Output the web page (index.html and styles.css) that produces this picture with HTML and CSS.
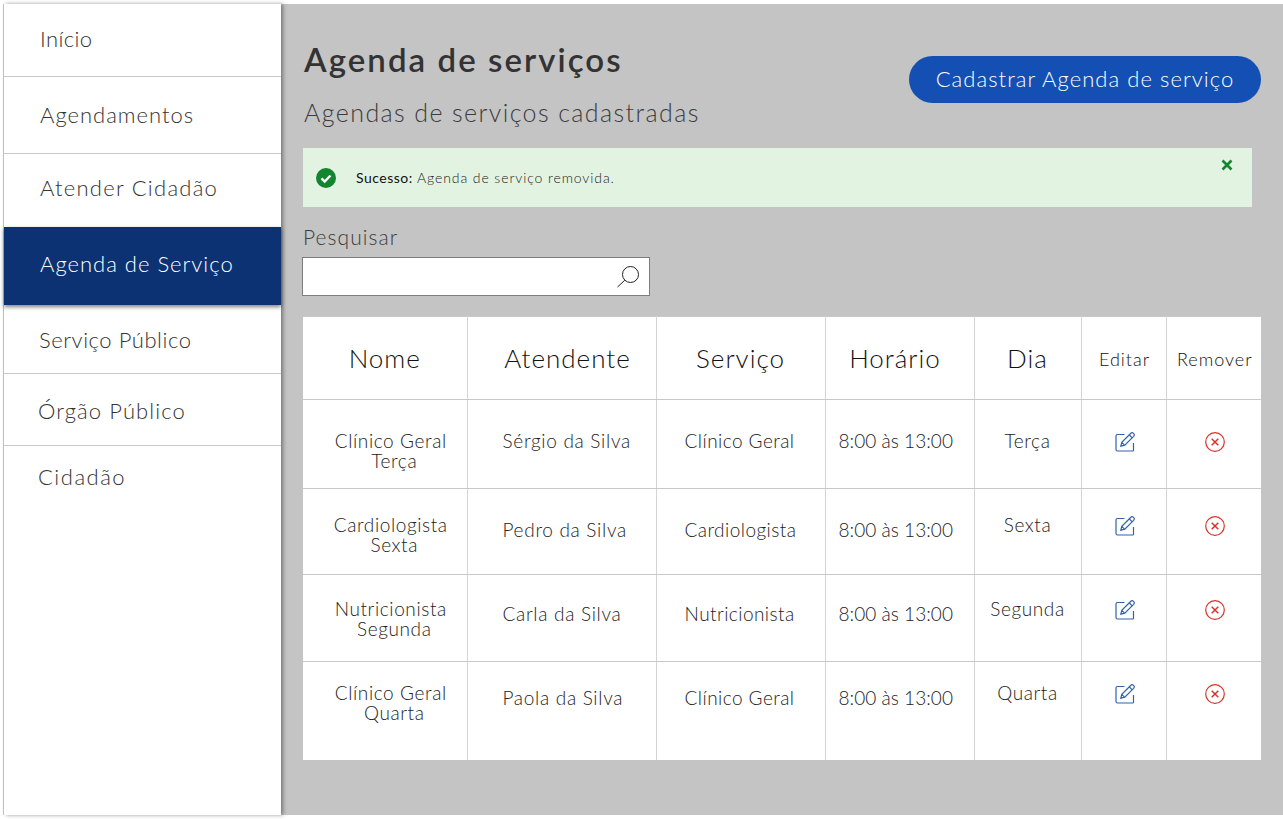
FILE: index.html
```html
<!DOCTYPE html>
<html>
	<head>
		<meta charset="UTF-8">
		<title>Agenda de serviços</title>
		<link rel="stylesheet" href="styles.css">
	</head>
	<body>
		<svg class="defs">
			<symbol id="i-edit" viewBox="0 0 20 20">
				<path d="M9.500 2.500H2.500a1.500 1.500 0 0 0-1.500 1.500v13.500a1.500 1.500 0 0 0 1.500 1.500h15a1 1 0 0 0 1-1v-7" fill="none" stroke="#2f62ad" stroke-width="1.200"/>
				<path d="M5.800 14.200l1-3.800L15.600 1.500a1.600 1.600 0 0 1 3 2.800L9.800 13.200zM14.300 2.900l2.900 2.900M6.800 10.400l2.900 2.900" fill="none" stroke="#2f62ad" stroke-width="1.200"/>
			</symbol>
			<symbol id="i-remove" viewBox="0 0 20 20">
				<circle cx="10" cy="10" r="9.300" fill="none" stroke="#d2352c" stroke-width="1.200"/>
				<path d="M6.700 6.700l6.600 6.600M13.300 6.700l-6.600 6.600" fill="none" stroke="#d2352c" stroke-width="1.500"/>
			</symbol>
		</svg>
		<div id="box">
			<ul id="menu">
				<li class="m1">Início</li>
				<li class="m2">Agendamentos</li>
				<li class="m3">Atender Cidadão</li>
				<li class="m4 active">Agenda de Serviço</li>
				<li class="m5">Serviço Público</li>
				<li class="m6">Órgão Público</li>
				<li class="m7">Cidadão</li>
			</ul>
			<div id="main">
				<div class="top">
					<div>
						<h1>Agenda de serviços</h1>
						<h2>Agendas de serviços cadastradas</h2>
					</div>
					<a class="btn">Cadastrar Agenda de serviço</a>
				</div>
				<div class="alert">
					<svg class="ok" width="20" height="20" viewBox="0 0 20 20"><circle cx="10" cy="10" r="10" fill="#14852f"/><path d="M5.500 10.300l3.200 3.200 5.800-6" fill="none" stroke="#fff" stroke-width="2.400"/></svg>
					<p><b>Sucesso:</b> Agenda de serviço removida.</p>
					<svg class="close" width="12" height="12" viewBox="0 0 12 12"><path d="M1.500 1.500l9 9M10.500 1.500l-9 9" fill="none" stroke="#14852f" stroke-width="2.600"/></svg>
				</div>
				<label class="lbl">Pesquisar</label>
				<div class="search">
					<svg width="26" height="26" viewBox="0 0 26 26"><circle cx="15.500" cy="10.500" r="8" fill="none" stroke="#222" stroke-width="1"/><path d="M9.800 16.200L2.500 23" fill="none" stroke="#222" stroke-width="1"/></svg>
				</div>
				<table id="list">
					<colgroup>
						<col class="c1"><col class="c2"><col class="c3"><col class="c4"><col class="c5"><col class="c6"><col class="c7">
					</colgroup>
					<thead>
						<tr>
							<th>Nome</th><th class="h2">Atendente</th><th>Serviço</th><th class="h4">Horário</th><th>Dia</th><th class="small">Editar</th><th class="small">Remover</th>
						</tr>
					</thead>
					<tbody>
						<tr class="r1">
							<td class="up nome">Clínico Geral<span>Terça</span></td><td class="left pes">Sérgio da Silva</td><td class="left srv">Clínico Geral</td><td class="left hor">8:00 às 13:00</td><td class="up dia">Terça</td>
							<td class="up ico"><svg width="20" height="20"><use href="#i-edit"/></svg></td>
							<td class="up ico"><svg width="20" height="20"><use href="#i-remove"/></svg></td>
						</tr>
						<tr class="r2">
							<td class="up nome">Cardiologista<span>Sexta</span></td><td class="left pes">Pedro da Silva</td><td class="left srv">Cardiologista</td><td class="left hor">8:00 às 13:00</td><td class="up dia">Sexta</td>
							<td class="up ico"><svg width="20" height="20"><use href="#i-edit"/></svg></td>
							<td class="up ico"><svg width="20" height="20"><use href="#i-remove"/></svg></td>
						</tr>
						<tr class="r3">
							<td class="up nome">Nutricionista<span>Segunda</span></td><td class="left pes">Carla da Silva</td><td class="left srv">Nutricionista</td><td class="left hor">8:00 às 13:00</td><td class="up dia">Segunda</td>
							<td class="up ico"><svg width="20" height="20"><use href="#i-edit"/></svg></td>
							<td class="up ico"><svg width="20" height="20"><use href="#i-remove"/></svg></td>
						</tr>
						<tr class="r4">
							<td class="up nome">Clínico Geral<span>Quarta</span></td><td class="left pes">Paola da Silva</td><td class="left srv">Clínico Geral</td><td class="left hor">8:00 às 13:00</td><td class="up dia">Quarta</td>
							<td class="up ico"><svg width="20" height="20"><use href="#i-edit"/></svg></td>
							<td class="up ico"><svg width="20" height="20"><use href="#i-remove"/></svg></td>
						</tr>
					</tbody>
				</table>
			</div>
		</div>
	</body>
</html>
```

FILE: styles.css
```css
* {
	box-sizing: border-box;
}

html,
body {
	margin: 0;
	padding: 0;
	height: 100%;
	overflow: hidden;
	background: #fff;
}

body {
	font-family: "Lato", "Liberation Sans", sans-serif;
	font-weight: 300;
	color: #333;
}

.defs {
	display: none;
}

#box {
	display: flex;
	margin: 4px 0 0 3px;
	height: 811px;
	border-left: 1px solid #c8c8c8;
}

ul {
	margin: 0;
	padding: 0;
	list-style: none;
}

#menu {
	flex: none;
	width: 277px;
	background: #fff;
	position: relative;
	z-index: 1;
	box-shadow: 2px 0 4px rgba(0, 0, 0, .4);
}

#menu li {
	display: flex;
	align-items: center;
	padding-left: 36px;
	font-size: 22px;
	letter-spacing: 1.1px;
	color: #333;
	border-bottom: 1px solid #c9c9c9;
}

#menu .m1 { height: 73px; padding-bottom: 3px; letter-spacing: .4px; }
#menu .m2 { height: 77px; padding-bottom: 2px; letter-spacing: 1px; }
#menu .m3 { height: 73px; padding-bottom: 7px; letter-spacing: 1.25px; border-bottom: 0; }
#menu .m4 { height: 78px; padding-bottom: 6px; letter-spacing: 1px; }
#menu .m5 { height: 69px; padding-left: 35px; letter-spacing: .55px; }
#menu .m6 { height: 72px; padding-left: 34px; padding-top: 2px; }
#menu .m7 { height: 64px; padding-left: 34px; padding-bottom: 4px; letter-spacing: 1.5px; border-bottom: 0; }

#menu .active {
	background: #0c3273;
	color: #fff;
	border-bottom: 0;
	box-shadow: 0 2px 4px rgba(0, 0, 0, .5);
}

#main {
	flex: 1;
	padding: 36px 22px 0;
	background: #c4c4c4;
}

.top {
	display: flex;
	justify-content: space-between;
	align-items: flex-start;
}

h1 {
	margin: -1px 0 0 1px;
	font-size: 33px;
	line-height: 40px;
	font-weight: 600;
	letter-spacing: 2.05px;
	color: #333;
}

h2 {
	margin: 18px 0 1px 1px;
	font-size: 25px;
	line-height: 30px;
	font-weight: 300;
	letter-spacing: 1.4px;
	color: #3c3c3c;
}

.btn {
	display: flex;
	align-items: center;
	justify-content: center;
	width: 352px;
	height: 47px;
	margin-top: 16px;
	padding-bottom: 2px;
	border-radius: 24px;
	background: #1450b4;
	color: #fff;
	font-size: 22px;
	letter-spacing: 1.05px;
}

.alert {
	display: flex;
	align-items: center;
	height: 59px;
	margin: 20px 9px 0 0;
	padding: 0 19px 0 13px;
	background: #e3f3e1;
}

.alert p {
	flex: 1;
	margin: 0 0 1px 20px;
	font-size: 14px;
	letter-spacing: .9px;
	color: #222;
}

.alert b {
	letter-spacing: .5px;
	color: #111;
}

.ok {
	flex: none;
}

.close {
	flex: none;
	align-self: flex-start;
	margin-top: 11px;
}

.lbl {
	display: block;
	margin-top: 18px;
	font-size: 21px;
	line-height: 24px;
	letter-spacing: 1.05px;
	color: #3c3c3c;
}

.search {
	display: flex;
	align-items: center;
	justify-content: flex-end;
	width: 348px;
	height: 39px;
	margin: 8px 0 0 -1px;
	padding-right: 8px;
	background: #fff;
	border: 1px solid #7d7d7d;
}

#list {
	width: 958px;
	margin-top: 20px;
	table-layout: fixed;
	border-collapse: collapse;
	background: #fff;
	color: #222;
}

.c1 { width: 164px; }
.c2 { width: 189px; }
.c3 { width: 169px; }
.c4 { width: 149px; }
.c5 { width: 107px; }
.c6 { width: 85px; }
.c7 { width: 95px; }

#list th,
#list td {
	border: 1px solid #d4d4d4;
	border-top-color: #c8c8c8;
	border-bottom-color: #c8c8c8;
	text-align: center;
	vertical-align: top;
	padding: 0;
}

#list th:first-child,
#list td:first-child {
	border-left: 0;
}

#list th:last-child,
#list td:last-child {
	border-right: 0;
}

#list thead tr {
	height: 83px;
}

#list th {
	padding-top: 25px;
	font-size: 26px;
	line-height: 32px;
	font-weight: 300;
	letter-spacing: 1px;
	color: #111;
}

#list th.h2 {
	padding-left: 12px;
}

#list th.h4 {
	padding-right: 9px;
}

#list th.small {
	padding: 31px 0 0 2px;
	font-size: 18px;
	line-height: 22px;
	letter-spacing: 1px;
}

#list td {
	font-size: 19px;
	line-height: 20px;
	letter-spacing: .6px;
}

#list td.left {
	text-align: left;
}

#list td.pes {
	padding-left: 35px;
	letter-spacing: .7px;
}

#list td.srv {
	padding-left: 28px;
	letter-spacing: .45px;
}

#list td.hor {
	padding-left: 13px;
	letter-spacing: .05px;
}

#list .nome {
	padding-left: 12px;
}

#list .nome span {
	display: block;
	padding-left: 7px;
}

#list .ico svg {
	display: inline-block;
	vertical-align: top;
}

#list .ico {
	padding-left: 2px;
}

#list td.ico:last-child {
	padding-left: 3px;
}

#list .r1 { height: 89px; }
#list .r2 { height: 86px; }
#list .r3 { height: 87px; }
#list .r4 { height: 98px; }

#list .r1 td { padding-top: 31px; }
#list .r2 td { padding-top: 31px; }
#list .r3 td { padding-top: 29px; }
#list .r4 td { padding-top: 26px; }

#list .r1 td.up { padding-top: 31px; }
#list .r2 td.up { padding-top: 26px; }
#list .r3 td.up { padding-top: 24px; }
#list .r4 td.up { padding-top: 21px; }

#list .r1 td.ico { padding-top: 32px; }
#list .r2 td.ico { padding-top: 27px; }
#list .r3 td.ico { padding-top: 25px; }
#list .r4 td.ico { padding-top: 22px; }

#list tbody tr:last-child td {
	border-bottom: 0;
}
```
